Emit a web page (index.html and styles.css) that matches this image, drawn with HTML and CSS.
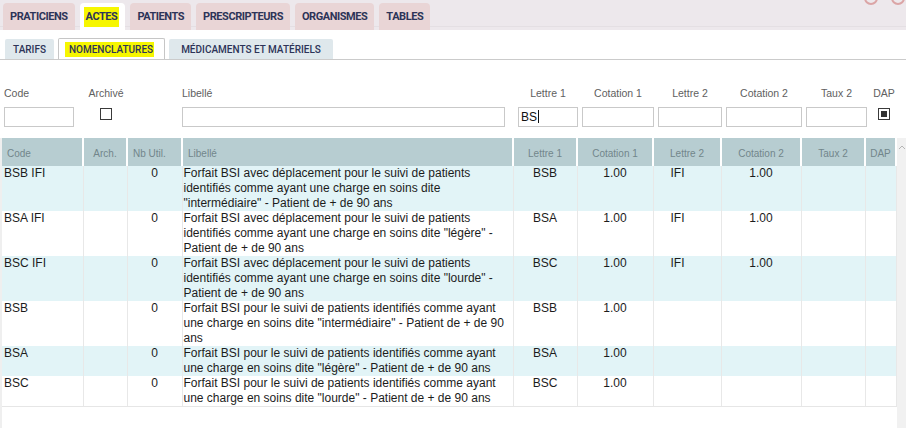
FILE: index.html
```html
<!DOCTYPE html>
<html lang="fr">
<head>
  <meta charset="UTF-8" />
  <meta name="viewport" content="width=device-width, initial-scale=1" />
  <title>Actes - Nomenclatures</title>
  <link rel="stylesheet" href="styles.css">
</head>
<body>

<header class="topbar">
  <nav class="main-tabs">
    <a class="tab">PRATICIENS</a>
    <a class="tab active"><mark>ACTES</mark></a>
    <a class="tab">PATIENTS</a>
    <a class="tab">PRESCRIPTEURS</a>
    <a class="tab">ORGANISMES</a>
    <a class="tab">TABLES</a>
  </nav>
  <div class="win-btns">
    <span class="win-btn"></span>
    <span class="win-btn"></span>
  </div>
</header>

<nav class="sub-tabs">
  <a class="subtab">TARIFS</a>
  <a class="subtab active"><mark>NOMENCLATURES</mark></a>
  <a class="subtab">MÉDICAMENTS ET MATÉRIELS</a>
</nav>

<form class="filters">
  <div class="field f-code">
    <label>Code</label>
    <input type="text" />
  </div>
  <div class="field f-arch center">
    <label>Archivé</label>
    <input type="checkbox" class="check" />
  </div>
  <div class="field f-lib">
    <label>Libellé</label>
    <input type="text" />
  </div>
  <div class="field f-l1 center">
    <label>Lettre 1</label>
    <div class="typed">BS<span class="caret"></span></div>
  </div>
  <div class="field f-c1 center">
    <label>Cotation 1</label>
    <input type="text" />
  </div>
  <div class="field f-l2 center">
    <label>Lettre 2</label>
    <input type="text" />
  </div>
  <div class="field f-c2 center">
    <label>Cotation 2</label>
    <input type="text" />
  </div>
  <div class="field f-t2 center">
    <label>Taux 2</label>
    <input type="text" />
  </div>
  <div class="field f-dap center">
    <label>DAP</label>
    <input type="checkbox" class="check partial" />
  </div>
</form>

<div class="grid">
  <div class="grid-body">
    <table class="acts">
      <colgroup>
        <col style="width:81px">
        <col style="width:44px">
        <col style="width:55px">
        <col style="width:331px">
        <col style="width:64px">
        <col style="width:76px">
        <col style="width:68px">
        <col style="width:80px">
        <col style="width:64px">
        <col style="width:31px">
      </colgroup>
      <thead>
        <tr>
          <th class="left">Code</th>
          <th>Arch.</th>
          <th class="left">Nb Util.</th>
          <th class="left">Libellé</th>
          <th>Lettre 1</th>
          <th>Cotation 1</th>
          <th>Lettre 2</th>
          <th>Cotation 2</th>
          <th>Taux 2</th>
          <th>DAP</th>
        </tr>
      </thead>
      <tbody>
        <tr class="alt">
          <td>BSB IFI</td><td></td><td class="num">0</td>
          <td class="lib">Forfait BSI avec déplacement pour le suivi de patients identifiés comme ayant une charge en soins dite "intermédiaire" - Patient de + de 90 ans</td>
          <td class="num">BSB</td><td class="num">1.00</td><td class="l2">IFI</td><td class="num">1.00</td><td></td><td></td>
        </tr>
        <tr>
          <td>BSA IFI</td><td></td><td class="num">0</td>
          <td class="lib">Forfait BSI avec déplacement pour le suivi de patients identifiés comme ayant une charge en soins dite "légère" - Patient de + de 90 ans</td>
          <td class="num">BSA</td><td class="num">1.00</td><td class="l2">IFI</td><td class="num">1.00</td><td></td><td></td>
        </tr>
        <tr class="alt">
          <td>BSC IFI</td><td></td><td class="num">0</td>
          <td class="lib">Forfait BSI avec déplacement pour le suivi de patients identifiés comme ayant une charge en soins dite "lourde" - Patient de + de 90 ans</td>
          <td class="num">BSC</td><td class="num">1.00</td><td class="l2">IFI</td><td class="num">1.00</td><td></td><td></td>
        </tr>
        <tr>
          <td>BSB</td><td></td><td class="num">0</td>
          <td class="lib">Forfait BSI pour le suivi de patients identifiés comme ayant une charge en soins dite "intermédiaire" - Patient de + de 90 ans</td>
          <td class="num">BSB</td><td class="num">1.00</td><td></td><td></td><td></td><td></td>
        </tr>
        <tr class="alt">
          <td>BSA</td><td></td><td class="num">0</td>
          <td class="lib">Forfait BSI pour le suivi de patients identifiés comme ayant une charge en soins dite "légère" - Patient de + de 90 ans</td>
          <td class="num">BSA</td><td class="num">1.00</td><td></td><td></td><td></td><td></td>
        </tr>
        <tr>
          <td>BSC</td><td></td><td class="num">0</td>
          <td class="lib">Forfait BSI pour le suivi de patients identifiés comme ayant une charge en soins dite "lourde" - Patient de + de 90 ans</td>
          <td class="num">BSC</td><td class="num">1.00</td><td></td><td></td><td></td><td></td>
        </tr>
      </tbody>
    </table>
  </div>
  <div class="scrollbar">
    <svg class="scroll-up" width="8" height="6" viewBox="0 0 8 6">
      <polyline points="1,5 4,2 7,5" fill="none" stroke="#b5b5b5" stroke-width="1" />
    </svg>
  </div>
</div>

</body>
</html>
```

FILE: styles.css
```css
body {
  margin: 0;
  padding: 0;
  background: #fff;
  font-family: "Liberation Sans", Arial, sans-serif;
  color: #1c1c1c;
  overflow: hidden;
}

mark {
  background: #f6f600;
  color: inherit;
  padding: 3px 2px 4px;
}

/* main tabs */
.topbar {
  display: flex;
  height: 30px;
  background: #ede8ec;
  box-shadow: inset 0 -3px 0 #ede8ec, inset 0 -4px 0 #e4dfe3;
}
.main-tabs {
  display: flex;
  align-items: flex-end;
  gap: 5px;
  padding-left: 3px;
}
.tab {
  height: 27px;
  line-height: 27px;
  padding: 0 7px;
  background: #e9d5d6;
  border-radius: 4px 4px 0 0;
  font-family: Roboto, "Liberation Sans", sans-serif;
  font-weight: 700;
  font-size: 11px;
  letter-spacing: -0.45px;
  color: #2d3458;
}
.tab.active {
  background: #fff;
  padding: 0 6px 0 4px;
}
.win-btns {
  margin-left: auto;
  display: flex;
  gap: 13px;
  margin-right: 1px;
}
.win-btn {
  width: 10px;
  height: 10px;
  margin-top: -9px;
  border: 2px solid #dba5a6;
  border-radius: 50%;
}

/* sub tabs */
.sub-tabs {
  display: flex;
  align-items: flex-end;
  gap: 4px;
  height: 29px;
  padding-left: 5px;
  border-bottom: 1px solid #cbcbcb;
}
.subtab {
  height: 20px;
  line-height: 21px;
  padding: 0 8px;
  background: #dfe8ec;
  border-radius: 2px 2px 0 0;
  font-family: Roboto, "Liberation Sans", sans-serif;
  font-weight: 500;
  font-size: 10px;
  color: #2d3458;
}
.subtab.active {
  height: 20px;
  padding: 0 10px 0 6px;
  background: #fff;
  border: 1px solid #c6c6c6;
  border-bottom: none;
}
.subtab.active mark {
  padding: 2px 1px 2px 4px;
}
.subtab:last-child {
  padding: 0 12px;
}

/* filters */
.filters {
  display: flex;
  padding: 27px 0 0 4px;
  margin: 0 0 11px;
}
.field {
  display: flex;
  flex-direction: column;
}
.field label {
  height: 14px;
  margin-bottom: 6px;
  font-size: 10.5px;
  color: #606060;
}
.field.center {
  align-items: center;
}
.field input[type="text"],
.field .typed {
  box-sizing: border-box;
  width: 100%;
  height: 20px;
  margin: 0;
  padding: 0 2px;
  border: 1px solid #c9c9c9;
  border-radius: 0;
  background: #fff;
  font-family: "Liberation Sans", Arial, sans-serif;
  font-size: 12px;
  color: #111;
}
.field .typed {
  line-height: 18px;
}
.caret {
  display: inline-block;
  width: 1px;
  height: 13px;
  margin-left: 1px;
  vertical-align: -2px;
  background: #111;
}
.check {
  appearance: none;
  width: 12px;
  height: 12px;
  margin: 1px 0 0;
  border: 1px solid #3a3a3a;
  border-radius: 0;
  background: #fff;
}
.check.partial {
  background: #333;
  box-shadow: inset 0 0 0 2px #fff;
}
.f-code { width: 70px; }
.f-arch { width: 38px; margin-left: 13px; }
.f-lib  { width: 323px; margin-left: 57px; }
.f-l1   { width: 60px; margin-left: 13px; }
.f-c1   { width: 72px; margin-left: 4px; }
.f-l2   { width: 64px; margin-left: 4px; }
.f-c2   { width: 76px; margin-left: 4px; }
.f-t2   { width: 61px; margin-left: 4px; }
.f-dap  { width: 26px; margin-left: 4px; }

/* grid */
.grid {
  display: flex;
  height: 290px;
  border-left: 2px solid #efefef;
}
.grid-body {
  flex: 1;
}
.acts {
  width: 894px;
  table-layout: fixed;
  border-collapse: collapse;
  font-size: 12px;
}
.acts th {
  height: 26px;
  padding: 2px 2px 0;
  background: #b7cdd1;
  border-right: 2px solid #fff;
  font-weight: normal;
  font-size: 10px;
  color: #72868b;
  text-align: center;
  white-space: nowrap;
}
.acts th.left {
  text-align: left;
  padding-left: 5px;
}
.acts td {
  padding: 0 2px;
  line-height: 15px;
  vertical-align: top;
  border-right: 1px solid #e8e8e8;
  color: #1c1c1c;
}
.acts tbody tr:last-child td {
  border-bottom: 1px solid #e6e6e6;
}
.acts tr.alt td {
  background: #e2f4f7;
}
.acts td.num {
  text-align: center;
}
.acts td.lib {
  padding: 0 6px 0 1px;
}
.acts td.l2 {
  padding-left: 17px;
}
.scrollbar {
  width: 10px;
  background: #f1f1f1;
  display: flex;
  justify-content: center;
  padding-top: 6px;
  box-sizing: border-box;
}
.scroll-up {
  display: block;
}
```
